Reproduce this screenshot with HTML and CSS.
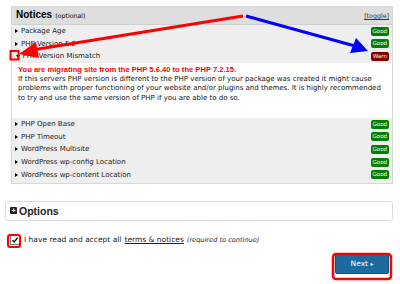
FILE: index.html
```html
<!DOCTYPE html>
<html lang="en">
<head>
  <meta charset="UTF-8" />
  <title>Notices</title>
  <link rel="stylesheet" href="styles.css">
</head>
<body>

  <div class="page">
    <div class="notices">
      <div class="notices-head">
        <span class="title">Notices</span> <span class="optional">(optional)</span>
        <a class="toggle" href="#">[toggle]</a>
      </div>

      <div class="row"><span class="caret right"></span>Package Age<span class="badge good">Good</span></div>
      <div class="row"><span class="caret right"></span>PHP Version 5.2<span class="badge good">Good</span></div>
      <div class="row"><span class="caret down"></span>PHP Version Mismatch<span class="badge warn">Warn</span></div>

      <div class="detail">
        <b>You are migrating site from the PHP 5.6.40 to the PHP 7.2.15.</b><br>
        If this servers PHP version is different to the PHP version of your package was created it might cause
        problems with proper functioning of your website and/or plugins and themes. It is highly recommended to
        try and use the same version of PHP if you are able to do so.
      </div>

      <div class="row"><span class="caret right"></span>PHP Open Base<span class="badge good">Good</span></div>
      <div class="row"><span class="caret right"></span>PHP Timeout<span class="badge good">Good</span></div>
      <div class="row"><span class="caret right"></span>WordPress Multisite<span class="badge good">Good</span></div>
      <div class="row"><span class="caret right"></span>WordPress wp-config Location<span class="badge good">Good</span></div>
      <div class="row"><span class="caret right"></span>WordPress wp-content Location<span class="badge good">Good</span></div>
    </div>

    <div class="options">
      <span class="plus">+</span>Options
    </div>

    <div class="accept">
      <span class="check">
        <svg width="8" height="8" viewBox="0 0 8 8"><path d="M1.5 4.2 L3.2 6 L6.6 1.8" fill="none" stroke="#111" stroke-width="1.4" /></svg>
      </span>
      I have read and accept all <a href="#">terms &amp; notices</a> <i>(required to continue)</i>
    </div>

    <div class="actions">
      <button class="next">Next <span class="tri">&#9656;</span></button>
    </div>

    <!-- annotation arrows drawn over the screenshot -->
    <svg class="marks" width="400" height="284" viewBox="0 0 400 284">
      <line x1="243" y1="16" x2="32" y2="50" stroke="#f00" stroke-width="3" />
      <polygon points="19,54 36,42 39,58" fill="#f00" />
      <line x1="246" y1="16" x2="355" y2="46" stroke="#00f" stroke-width="3" />
      <polygon points="368,51 350,53 356,38" fill="#00f" />
      <rect x="10.5" y="51" width="8" height="8.5" fill="none" stroke="#f00" stroke-width="2" />
      <rect x="8" y="235" width="12" height="12" rx="2" fill="none" stroke="#f00" stroke-width="2" />
      <rect x="333" y="254" width="58" height="25" rx="3" fill="none" stroke="#f00" stroke-width="2.5" />
    </svg>
  </div>

</body>
</html>
```

FILE: styles.css
```css
body {
  margin: 0;
  font-family: 'DejaVu Sans', Verdana, sans-serif;
  font-size: 7px;
  color: #000;
  background: #fff;
}

.page {
  position: relative;
  width: 400px;
  height: 284px;
  padding-top: 6px;
  box-sizing: border-box;
}

.notices {
  margin-left: 11px;
  width: 382px;
  border: 1px solid #d8d8d8;
  background: #eee;
  box-sizing: border-box;
  padding-bottom: 2px;
}

.notices-head {
  display: flex;
  align-items: baseline;
  height: 18px;
  padding: 2px 3px 0 4px;
  box-sizing: border-box;
  background: #dedede;
  border-bottom: 1px solid #d0d0d0;
}

.title {
  font-family: 'Liberation Sans', Arial, sans-serif;
  font-weight: bold;
  font-size: 10px;
}

.optional {
  font-size: 6.3px;
  margin-left: 3px;
}

.toggle {
  margin-left: auto;
  font-size: 6.3px;
  color: #333;
}

.row {
  display: flex;
  align-items: center;
  height: 12.6px;
  padding: 0 3px 0 3px;
  color: #222;
}

.caret {
  width: 0;
  height: 0;
  margin-right: 3px;
  border-style: solid;
}

.caret.right {
  border-width: 2.5px 0 2.5px 3px;
  border-color: transparent transparent transparent #000;
}

.caret.down {
  border-width: 3px 2.5px 0 2.5px;
  border-color: #000 transparent transparent transparent;
  margin-left: 0.5px;
}

.badge {
  margin-left: auto;
  font-size: 5.5px;
  color: #fff;
  padding: 1px 2px;
  border-radius: 2px;
  line-height: 7px;
}

.badge.good {
  background: #008000;
}

.badge.warn {
  background: #800000;
}

.detail {
  background: #fff;
  padding: 2px 6px 15px 6px;
  font-size: 7px;
  line-height: 9.3px;
  color: #111;
}

.detail b {
  font-family: 'Liberation Sans', Arial, sans-serif;
  font-size: 7.6px;
  color: #f00;
}

.options {
  display: flex;
  align-items: center;
  margin: 17px 7px 0 5px;
  height: 18px;
  border: 1px solid #ddd;
  border-radius: 3px;
  padding-left: 4px;
  font-family: 'Liberation Sans', Arial, sans-serif;
  font-weight: bold;
  font-size: 10.5px;
  color: #222;
}

.plus {
  display: inline-block;
  width: 7px;
  height: 7px;
  line-height: 7px;
  margin-right: 2px;
  background: #222;
  color: #fff;
  font-size: 7px;
  text-align: center;
  border-radius: 1px;
}

.accept {
  display: flex;
  align-items: center;
  margin: 14px 0 0 10px;
  font-size: 7.5px;
  color: #222;
  white-space: nowrap;
}

.check {
  display: flex;
  width: 8px;
  height: 8px;
  margin-right: 4px;
  border: 1px solid #777;
  background: #fff;
}

.accept a {
  color: #222;
  margin: 0 3px;
}

.accept i {
  font-size: 6.6px;
}

.actions {
  display: flex;
  justify-content: flex-end;
  margin: 8px 11px 0 0;
}

.next {
  width: 54px;
  height: 21px;
  border: 1px solid #125080;
  border-radius: 2px;
  background: #1c6a9e;
  color: #fff;
  font-family: 'DejaVu Sans', Verdana, sans-serif;
  font-size: 7.5px;
  padding: 0;
}

.tri {
  font-size: 6px;
}

.marks {
  position: absolute;
  left: 0;
  top: 0;
  pointer-events: none;
}
```
